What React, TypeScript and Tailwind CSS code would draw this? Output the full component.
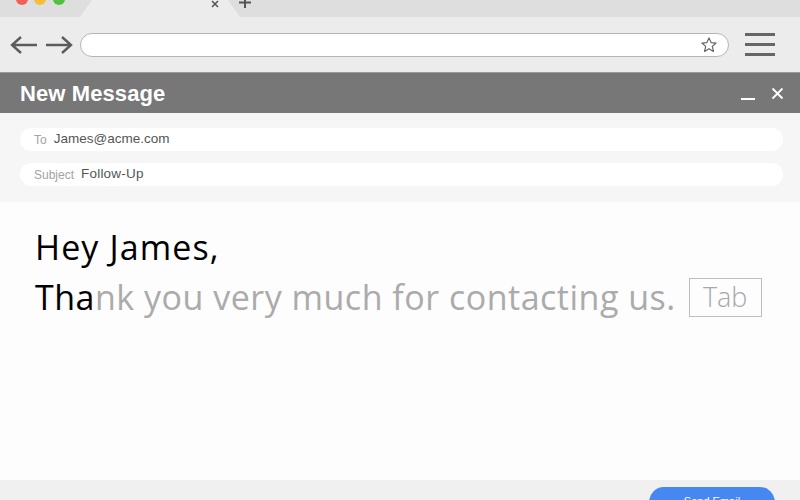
import React from "react";

export default function App() {
  return (
    <div className="w-[800px] h-[500px] overflow-hidden flex flex-col bg-white" style={{ fontFamily: '"Open Sans", "Liberation Sans", sans-serif' }}>
      {/* tab strip */}
      <div className="h-[17px] bg-[#dedede] relative shrink-0">
        <div className="absolute left-[16px] top-[-7px] w-[12px] h-[12px] rounded-full bg-[#f25f57]" />
        <div className="absolute left-[34px] top-[-7px] w-[12px] h-[12px] rounded-full bg-[#f7bd3b]" />
        <div className="absolute left-[53px] top-[-7px] w-[12px] h-[12px] rounded-full bg-[#4fc33e]" />
        <svg className="absolute left-[80px] top-0" width="160" height="17" viewBox="0 0 160 17">
          <path d="M0 17 L12 0 L148 0 L160 17 Z" fill="#ececec" />
        </svg>
        <svg className="absolute left-[211px] top-[0px]" width="8" height="8" viewBox="0 0 8 8">
          <path d="M1 1 L7 7 M7 1 L1 7" stroke="#555" strokeWidth="1.6" />
        </svg>
        <svg className="absolute left-[238px] top-[-3px]" width="14" height="12" viewBox="0 0 14 12">
          <path d="M7 0 V11 M1 5.5 H13" stroke="#555" strokeWidth="2" />
        </svg>
      </div>
      {/* toolbar */}
      <div className="h-[55px] bg-[#ececec] flex items-center shrink-0">
        <svg className="ml-[10px]" width="28" height="20" viewBox="0 0 28 20">
          <path d="M27 10 H2 M11 2 L2 10 L11 18" stroke="#5c5c5c" strokeWidth="2.4" fill="none" />
        </svg>
        <svg className="ml-[7px]" width="28" height="20" viewBox="0 0 28 20">
          <path d="M1 10 H26 M17 2 L26 10 L17 18" stroke="#5c5c5c" strokeWidth="2.4" fill="none" />
        </svg>
        <div className="ml-[7px] w-[649px] h-[24px] bg-white rounded-full border border-[#b5b5b5] flex items-center justify-end pr-[10px]">
          <svg width="18" height="18" viewBox="0 0 24 24">
            <path d="M12 2.5 L14.8 8.8 L21.5 9.4 L16.4 13.9 L17.9 20.6 L12 17.1 L6.1 20.6 L7.6 13.9 L2.5 9.4 L9.2 8.8 Z" stroke="#666" strokeWidth="1.6" fill="none" strokeLinejoin="round" />
          </svg>
        </div>
        <div className="ml-[16px] flex flex-col gap-[7px]">
          <div className="w-[30px] h-[3px] bg-[#666]" />
          <div className="w-[30px] h-[3px] bg-[#666]" />
          <div className="w-[30px] h-[3px] bg-[#666]" />
        </div>
      </div>
      {/* header */}
      <div className="h-[41px] bg-[#777777] border-t border-[#9a9a9a] flex items-center px-[20px] shrink-0" style={{ fontFamily: '"Liberation Sans", Arial, sans-serif' }}>
        <div className="text-white font-bold text-[22px] tracking-[0.1px]">New Message</div>
        <div className="ml-auto flex items-center gap-[16px]">
          <div className="w-[14px] h-[2px] bg-white mt-[12px]" />
          <svg width="13" height="13" viewBox="0 0 13 13" className="mr-[-4px]">
            <path d="M1.5 1.5 L11.5 11.5 M11.5 1.5 L1.5 11.5" stroke="#fff" strokeWidth="1.8" />
          </svg>
        </div>
      </div>
      {/* fields */}
      <div className="bg-[#f6f6f6] h-[89px] shrink-0 flex flex-col pt-[15px] gap-[12px] pl-[20px] pr-[17px]" style={{ fontFamily: '"Liberation Sans", Arial, sans-serif' }}>
        <div className="h-[23px] bg-white rounded-full flex items-center pl-[14px]">
          <span className="text-[12px] text-[#a3a3a3]">To</span>
          <span className="ml-[7px] text-[13.5px] text-[#555]">James@acme.com</span>
        </div>
        <div className="h-[23px] bg-white rounded-full flex items-center pl-[14px]">
          <span className="text-[12px] text-[#a3a3a3]">Subject</span>
          <span className="ml-[7px] text-[13.5px] text-[#555] tracking-[0.2px]">Follow-Up</span>
        </div>
      </div>
      {/* body */}
      <div className="flex-1 bg-[#fdfdfd] pl-[35px] pt-[20px]">
        <div className="text-[34px] leading-[50px] text-black tracking-[1.1px]">Hey James,</div>
        <div className="flex items-center text-[34px] leading-[50px] tracking-[0.5px]">
          <span className="text-black">Tha</span>
          <span className="text-[#ababab]">nk you very much for contacting us.</span>
          <span className="ml-[13px] h-[39px] w-[73px] border border-[#bdbdbd] flex items-center justify-center text-[27px] text-[#a8a8a8] font-light tracking-normal">Tab</span>
        </div>
      </div>
      {/* footer */}
      <div className="h-[20px] bg-[#f0f0f0] shrink-0 relative">
        <div className="absolute left-[649px] top-[7px] w-[126px] h-[30px] rounded-full bg-[#4688f1] text-white text-[11px] text-center pt-[6px]" style={{ fontFamily: '"Liberation Sans", Arial, sans-serif' }}>Send Email</div>
      </div>
    </div>
  );
}
